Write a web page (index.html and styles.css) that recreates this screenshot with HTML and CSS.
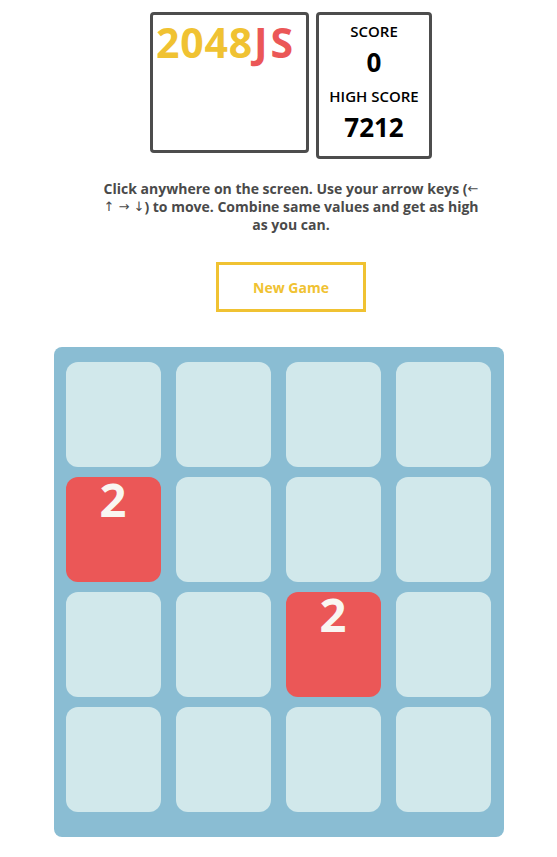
FILE: index.html
```html
<!DOCTYPE html>
<html>
<head>
<meta charset="utf-8">
<link rel="stylesheet" href="styles.css">
</head>
<body>
<div class="top">
  <div class="header">
    <div class="title-box"><span class="t-num">2048</span><span class="t-js">JS</span></div>
    <div class="score-box">
      <div class="label">SCORE</div>
      <div class="value">0</div>
      <div class="label label-2">HIGH SCORE</div>
      <div class="value">7212</div>
    </div>
  </div>
  <p class="desc">Click anywhere on the screen. Use your arrow keys (<span class="arr">←</span><br><span class="arr">↑ → ↓</span>) to move. Combine same values and get as high<br>as you can.</p>
  <button class="new-game">New Game</button>
</div>
<div class="board">
  <div class="tile"></div><div class="tile"></div><div class="tile"></div><div class="tile"></div>
  <div class="tile red">2</div><div class="tile"></div><div class="tile"></div><div class="tile"></div>
  <div class="tile"></div><div class="tile"></div><div class="tile red">2</div><div class="tile"></div>
  <div class="tile"></div><div class="tile"></div><div class="tile"></div><div class="tile"></div>
</div>
</body>
</html>
```
FILE: styles.css
```css
html, body {
  margin: 0;
  padding: 0;
  background: #ffffff;
}
body {
  font-family: "Open Sans", "Liberation Sans", sans-serif;
  color: #000;
}
.top {
  padding-left: 25px;
  padding-top: 12px;
  display: flex;
  flex-direction: column;
  align-items: center;
}
.header {
  display: flex;
  gap: 7px;
}
.title-box {
  width: 150px;
  height: 135px;
  border: 3px solid #4d4d4d;
  border-radius: 4px;
  padding: 0 0 0 3px;
  font-size: 41px;
  font-weight: 700;
  line-height: 54px;
  white-space: nowrap;
}
.t-num { color: #f0c232; letter-spacing: 0.8px; }
.t-js { color: #eb5757; letter-spacing: 3px; margin-left: 1px; }
.score-box {
  width: 110px;
  height: 135px;
  border: 3px solid #4d4d4d;
  border-radius: 4px;
  display: flex;
  flex-direction: column;
  align-items: center;
  padding-top: 6px;
  box-sizing: content-box;
}
.label {
  font-size: 15px;
  font-weight: 600;
  line-height: 20px;
}
.label-2 { margin-top: 6px; }
.value {
  font-size: 26px;
  font-weight: 700;
  line-height: 35px;
  margin-top: 4px;
}
.desc {
  width: 400px;
  margin: 21px 0 0 0;
  text-align: center;
  font-size: 14px;
  font-weight: 700;
  line-height: 18px;
  color: #4a4a4a;
}
.arr {
  font-family: "DejaVu Sans", sans-serif;
  font-weight: 400;
  font-size: 13px;
  line-height: 18px;
  vertical-align: top;
}
.new-game {
  margin-top: 28px;
  width: 150px;
  height: 50px;
  background: #fff;
  border: 3px solid #f0c232;
  color: #f0c232;
  font-family: "Open Sans", "Liberation Sans", sans-serif;
  font-size: 14px;
  font-weight: 700;
  padding: 0;
}
.board {
  width: 450px;
  box-sizing: border-box;
  margin: 35px auto 0;
  background: #8abdd3;
  border-radius: 8px;
  padding: 15px 13px 25px 12px;
  display: grid;
  grid-template-columns: repeat(4, 95px);
  grid-template-rows: repeat(4, 105px);
  column-gap: 15px;
  row-gap: 10px;
}
.tile {
  background: #d1e8eb;
  border-radius: 12px;
  text-align: center;
  font-size: 47px;
  font-weight: 700;
  line-height: 44px;
  color: #f9f6f2;
}
.tile.red {
  background: #eb5757;
}
```
